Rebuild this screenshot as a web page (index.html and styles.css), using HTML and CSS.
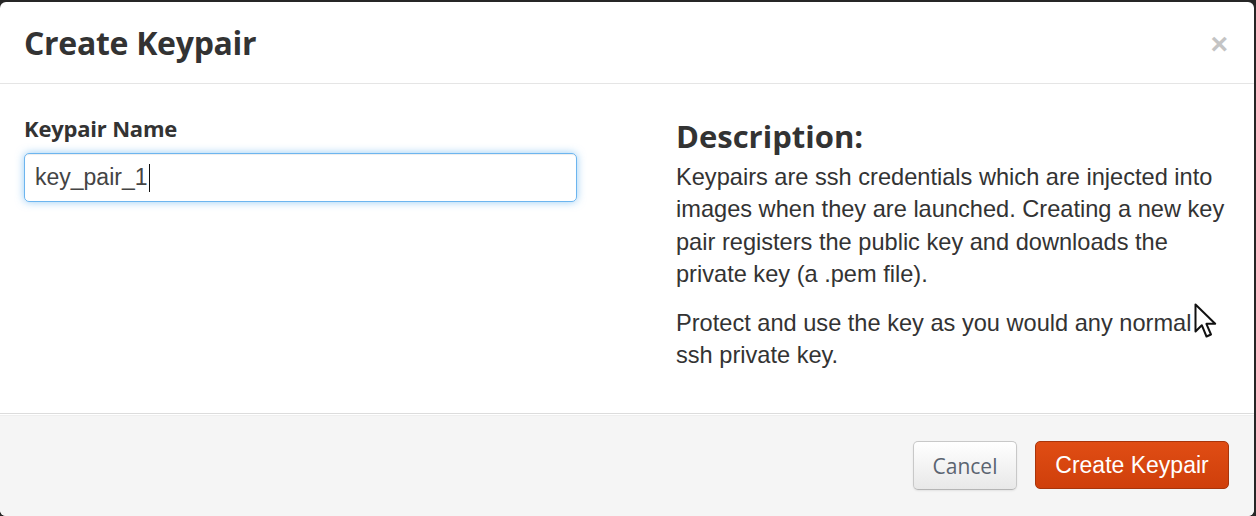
FILE: index.html
```html
<!DOCTYPE html>
<html>
<head>
<meta charset="utf-8">
<link rel="stylesheet" href="styles.css">
</head>
<body>
<div class="modal">
  <div class="modal-header">
    <h3 class="title">Create Keypair</h3>
    <span class="close">&times;</span>
  </div>
  <div class="modal-body">
    <div class="left">
      <label class="label">Keypair Name</label>
      <div class="input"><span class="value">key_pair_1</span><span class="caret"></span></div>
    </div>
    <div class="right">
      <h3 class="desc-title">Description:</h3>
      <p class="desc">Keypairs are ssh credentials which are injected into images when they are launched. Creating a new key pair registers the public key and downloads the private key (a .pem file).</p>
      <p class="desc">Protect and use the key as you would any normal ssh private key.</p>
    </div>
  </div>
  <div class="modal-footer">
    <button class="btn btn-cancel">Cancel</button>
    <button class="btn btn-primary">Create Keypair</button>
  </div>
  <svg class="cursor" width="26" height="38" viewBox="0 0 26 38">
    <path d="M1.5 1.5 L1.5 28.5 L7.8 22.2 L12.5 33.5 L17 31.5 L12.4 20.8 L21.2 20.8 Z" fill="#fff" stroke="#111" stroke-width="2" stroke-linejoin="round"/>
  </svg>
</div>
</body>
</html>
```

FILE: styles.css
```css
html, body {
  margin: 0;
  padding: 0;
}
body {
  background: #262626;
  width: 1256px;
  height: 516px;
  overflow: hidden;
  font-family: "Liberation Sans", Arial, sans-serif;
}
.modal {
  position: relative;
  margin-top: 2px;
  width: 1254px;
  height: 514px;
  background: #fff;
  border-radius: 6px;
  overflow: hidden;
  display: flex;
  flex-direction: column;
}
.modal-header {
  box-sizing: border-box;
  height: 82px;
  flex: none;
  border-bottom: 1px solid #e5e5e5;
  display: flex;
  align-items: center;
  justify-content: space-between;
  padding: 0 26px 0 24px;
}
.title {
  margin: 0;
  font-family: "Open Sans", sans-serif;
  font-weight: 700;
  font-size: 32px;
  color: #333;
  letter-spacing: -0.3px;
}
.close {
  font-family: "Liberation Sans", Arial, sans-serif;
  font-weight: 700;
  font-size: 30px;
  color: #c4c4c4;
  line-height: 1;
  margin-top: 2px;
}
.modal-body {
  flex: 1;
  display: grid;
  grid-template-columns: 553px 1fr;
  column-gap: 99px;
  padding: 28px 24px 0 24px;
}
.label {
  display: block;
  font-family: "Open Sans", sans-serif;
  font-weight: 700;
  font-size: 22px;
  line-height: 32px;
  color: #333;
  margin-bottom: 9px;
  letter-spacing: -0.2px;
}
.input {
  height: 47px;
  border: 1px solid rgba(82, 168, 236, 0.85);
  border-radius: 5px;
  box-shadow: inset 0 1px 1px rgba(0,0,0,0.075), 0 0 8px rgba(82,168,236,0.6);
  display: flex;
  align-items: center;
  padding-left: 10px;
  font-size: 23px;
  color: #444;
}
.caret {
  display: inline-block;
  width: 1px;
  height: 28px;
  background: #111;
  margin-left: 1px;
}
.desc-title {
  margin: 4px 0 5px 0;
  font-family: "Open Sans", sans-serif;
  font-weight: 700;
  font-size: 31px;
  color: #333;
  line-height: 40px;
}
.desc {
  margin: 0 0 17px 0;
  font-size: 23.6px;
  line-height: 32.3px;
  color: #333;
}
.modal-footer {
  box-sizing: border-box;
  height: 103px;
  flex: none;
  border-top: 1px solid #dcdcdc;
  box-shadow: inset 0 1px 0 #fff, inset 0 2px 0 #eee;
  background: #f5f5f5;
  display: flex;
  justify-content: flex-end;
  align-items: flex-start;
  padding: 27px 25px 0 0;
  gap: 18px;
}
.btn {
  height: 49px;
  border-radius: 5px;
  font-size: 20px;
  padding: 0;
  cursor: pointer;
}
.btn-cancel {
  font-family: "Open Sans", sans-serif;
  font-size: 21px;
  color: #5b6470;
  background: linear-gradient(#ffffff, #e8e8e8);
  border: 1px solid #c8c8c8;
  border-bottom-color: #b5b5b5;
  box-shadow: inset 0 1px 0 rgba(255,255,255,0.3), 0 1px 2px rgba(0,0,0,0.08);
  width: 104px;
}
.btn-primary {
  font-family: "Liberation Sans", Arial, sans-serif;
  font-size: 23px;
  color: #fff;
  background: linear-gradient(#e04d14, #cf3f0b);
  border: 1px solid #a8350b;
  width: 194px;
  height: 48px;
}
.cursor {
  position: absolute;
  left: 1194px;
  top: 301px;
}
```
